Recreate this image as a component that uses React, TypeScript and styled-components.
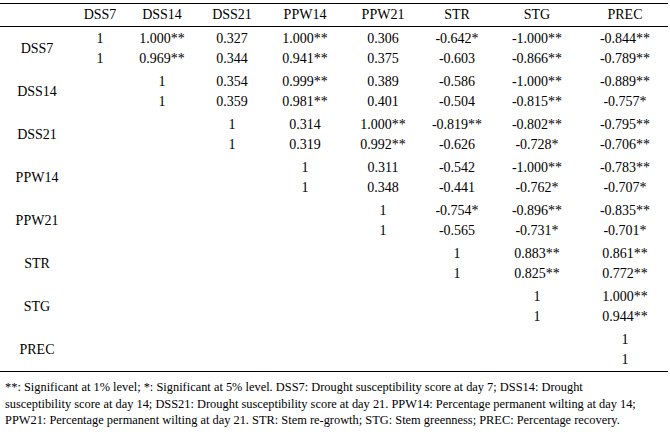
import React from "react";
import styled, { createGlobalStyle } from "styled-components";

const GlobalStyle = createGlobalStyle`
    html, body {
        margin: 0;
        padding: 0;
        background: #ffffff;
    }
    body {
        font-family: "Liberation Serif", "Times New Roman", serif;
        color: #000000;
    }
`;

const COLUMNS = "74px 52px 72px 68px 78px 78px 70px 90px 86px";

const Page = styled.div`
    width: 670px;
    height: 435px;
    padding-top: 3px;
    box-sizing: border-box;
    overflow: hidden;
`;

const Table = styled.div`
    width: 668px;
    border-top: 1px solid #000;
    border-bottom: 1px solid #000;
`;

const HeaderRow = styled.div`
    display: grid;
    grid-template-columns: ${COLUMNS};
    height: 22px;
    border-bottom: 1px solid #000;
    align-items: center;
    font-size: 14px;
`;

const HeadCell = styled.div`
    text-align: center;
    white-space: nowrap;
`;

const GroupRow = styled.div`
    display: grid;
    grid-template-columns: ${COLUMNS};
    height: 43px;
    font-size: 14px;
`;

const Label = styled.div`
    display: flex;
    align-items: center;
    justify-content: center;
`;

const Cell = styled.div`
    display: flex;
    flex-direction: column;
    justify-content: center;
    align-items: center;
    line-height: 20px;
    white-space: nowrap;
`;

const Note = styled.p`
    margin: 0;
    padding: 7px 0 0 5px;
    font-size: 12.4px;
    line-height: 16.5px;
    white-space: nowrap;
`;

const headers = ["DSS7", "DSS14", "DSS21", "PPW14", "PPW21", "STR", "STG", "PREC"];

// each cell holds two correlation values, one above the other
const rows: (string[] | null)[][] = [
    [["1", "1"], ["1.000**", "0.969**"], ["0.327", "0.344"], ["1.000**", "0.941**"], ["0.306", "0.375"], ["-0.642*", "-0.603"], ["-1.000**", "-0.866**"], ["-0.844**", "-0.789**"]],
    [null, ["1", "1"], ["0.354", "0.359"], ["0.999**", "0.981**"], ["0.389", "0.401"], ["-0.586", "-0.504"], ["-1.000**", "-0.815**"], ["-0.889**", "-0.757*"]],
    [null, null, ["1", "1"], ["0.314", "0.319"], ["1.000**", "0.992**"], ["-0.819**", "-0.626"], ["-0.802**", "-0.728*"], ["-0.795**", "-0.706**"]],
    [null, null, null, ["1", "1"], ["0.311", "0.348"], ["-0.542", "-0.441"], ["-1.000**", "-0.762*"], ["-0.783**", "-0.707*"]],
    [null, null, null, null, ["1", "1"], ["-0.754*", "-0.565"], ["-0.896**", "-0.731*"], ["-0.835**", "-0.701*"]],
    [null, null, null, null, null, ["1", "1"], ["0.883**", "0.825**"], ["0.861**", "0.772**"]],
    [null, null, null, null, null, null, ["1", "1"], ["1.000**", "0.944**"]],
    [null, null, null, null, null, null, null, ["1", "1"]],
];

const App: React.FC = () => {
    return (
        <>
            <GlobalStyle />
            <Page>
                <Table>
                    <HeaderRow>
                        <HeadCell />
                        {headers.map((h) => (
                            <HeadCell key={h}>{h}</HeadCell>
                        ))}
                    </HeaderRow>
                    {rows.map((cells, i) => (
                        <GroupRow key={headers[i]}>
                            <Label>{headers[i]}</Label>
                            {cells.map((pair, j) => (
                                <Cell key={j}>
                                    {pair && (
                                        <>
                                            <span>{pair[0]}</span>
                                            <span>{pair[1]}</span>
                                        </>
                                    )}
                                </Cell>
                            ))}
                        </GroupRow>
                    ))}
                </Table>
                <Note>
                    **: Significant at 1% level; *: Significant at 5% level. DSS7: Drought susceptibility score at day 7; DSS14: Drought
                    <br />
                    susceptibility score at day 14; DSS21: Drought susceptibility score at day 21. PPW14: Percentage permanent wilting at day 14;
                    <br />
                    PPW21: Percentage permanent wilting at day 21. STR: Stem re-growth; STG: Stem greenness; PREC: Percentage recovery.
                </Note>
            </Page>
        </>
    );
};

export default App;
